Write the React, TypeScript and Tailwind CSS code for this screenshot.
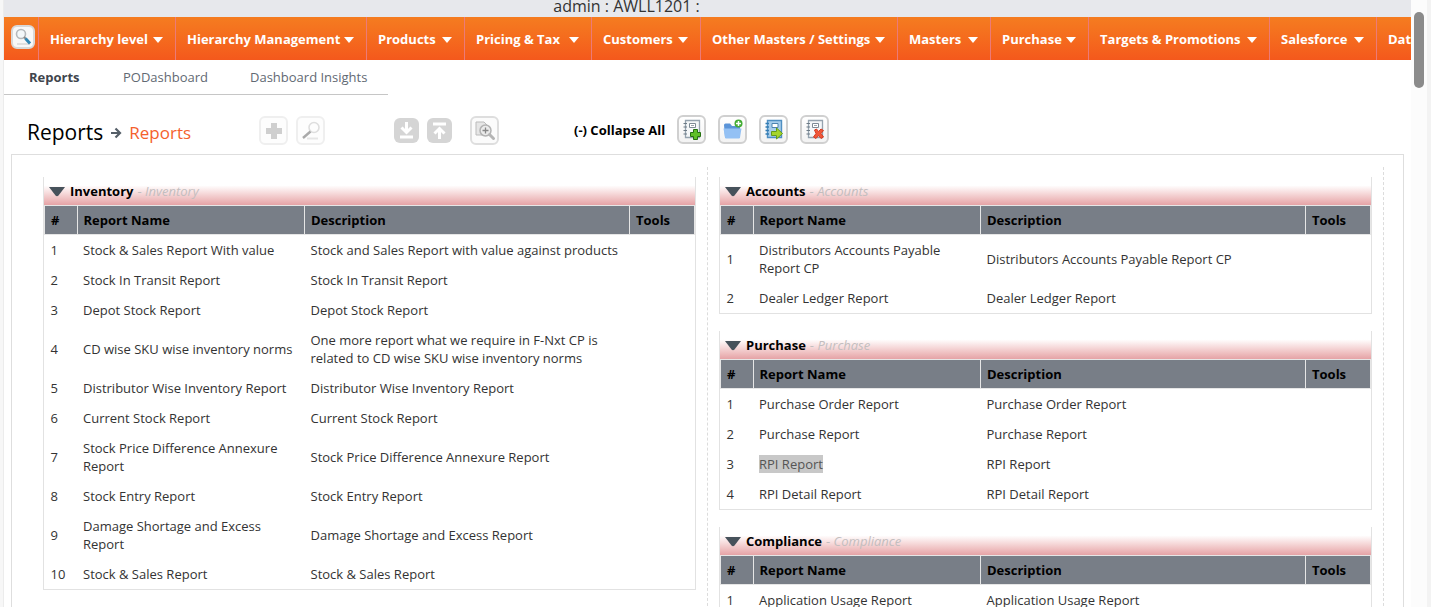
import type { ReactNode } from "react";

type Row = { name: string; description: string; selected?: boolean };
type Group = { title: string; rows: Row[] };

const same = (name: string, selected = false): Row => ({ name, description: name, selected });

const inventory: Group = {
  title: "Inventory",
  rows: [
    { name: "Stock & Sales Report With value", description: "Stock and Sales Report with value against products" },
    same("Stock In Transit Report"),
    same("Depot Stock Report"),
    {
      name: "CD wise SKU wise inventory norms",
      description: "One more report what we require in F-Nxt CP is related to CD wise SKU wise inventory norms",
    },
    same("Distributor Wise Inventory Report"),
    same("Current Stock Report"),
    same("Stock Price Difference Annexure Report"),
    same("Stock Entry Report"),
    same("Damage Shortage and Excess Report"),
    same("Stock & Sales Report"),
  ],
};

const rightGroups: Group[] = [
  { title: "Accounts", rows: [same("Distributors Accounts Payable Report CP"), same("Dealer Ledger Report")] },
  {
    title: "Purchase",
    rows: [same("Purchase Order Report"), same("Purchase Report"), same("RPI Report", true), same("RPI Detail Report")],
  },
  { title: "Compliance", rows: [same("Application Usage Report")] },
];

const menus = [
  { label: "Hierarchy level", width: "w-[137px]" },
  { label: "Hierarchy Management", width: "w-[191px]" },
  { label: "Products", width: "w-[98px]" },
  { label: "Pricing & Tax", width: "w-[127px]" },
  { label: "Customers", width: "w-[109px]" },
  { label: "Other Masters / Settings", width: "w-[197px]" },
  { label: "Masters", width: "w-[93px]" },
  { label: "Purchase", width: "w-[98px]" },
  { label: "Targets & Promotions", width: "w-[181px]" },
  { label: "Salesforce", width: "w-[107px]" },
  { label: "Dat", width: "w-[90px]" },
];

function Notebook() {
  return (
    <>
      <path d="M4.5 1.5h14v17h-14z" fill="#f4f7f9" stroke="#95a3af" strokeWidth="1.3" />
      <path d="M8.5 4.5h6v4h-6z" fill="#fff" stroke="#7d8a95" />
      <path d="M10 6.5h3" stroke="#9aa5ae" />
      <path d="M2.500 4.500h3.500M2.500 8h3.500M2.500 11.500h3.500M2.500 15h3.500" stroke="#6d7a85" strokeWidth="1.100" />
    </>
  );
}

const toolTones = {
  strong: "border-[#d0d0d0] bg-linear-to-b from-white to-[#f3f3f3]",
  soft: "border-[#dedede] bg-[#fbfbfb]",
  faded: "border-[#efefef] bg-[#fdfdfd]",
};

function ToolButton({ label, tone = "strong", children }: { label: string; tone?: keyof typeof toolTones; children: ReactNode }) {
  return (
    <button
      type="button"
      aria-label={label}
      className={`${toolTones[tone]} flex size-[29px] shrink-0 items-center justify-center rounded-md border-2`}
    >
      <svg viewBox="0 0 22 22" className="size-[22px] shrink-0" fill="none">
        {children}
      </svg>
    </button>
  );
}

function ArrowButton({ label, d }: { label: string; d: string }) {
  return (
    <button type="button" aria-label={label} className="flex size-[25px] shrink-0 items-center justify-center rounded-md bg-[#d5d5d5]">
      <svg viewBox="0 0 25 25" className="size-[25px]" fill="none" stroke="#fff" strokeWidth="3">
        <path d={d} />
      </svg>
    </button>
  );
}

function ReportGroup({ group }: { group: Group }) {
  return (
    <section className="border border-t-0 border-[#e2e2e2]">
      <h2 className="flex h-7 items-center bg-linear-to-b from-white from-30% to-[#e5a3a6] pt-0.5 pl-[5px] text-[13px] font-bold text-black">
        <button type="button" aria-label={`Collapse ${group.title}`} className="mr-[5px]">
          <svg viewBox="0 0 16 10" className="h-[10px] w-4">
            <path d="M0 0h16L9.500 8.500Q8 10 6.500 8.500z" fill="#47525b" />
          </svg>
        </button>
        {group.title}
        <span className="ml-1 font-normal text-[#c3bebf]">
          - <i>{group.title}</i>
        </span>
      </h2>
      <table className="w-full table-fixed border-collapse text-left text-[13px] leading-[18px]">
        <thead>
          <tr className="h-[29px] bg-[#787e87] text-black">
            <th className="w-[5%] border border-[#e6e6e6] px-1.5">#</th>
            <th className="w-[35%] border border-[#e6e6e6] px-1.5">Report Name</th>
            <th className="w-[50%] border border-[#e6e6e6] px-1.5">Description</th>
            <th className="w-[10%] border border-[#e6e6e6] px-1.5">Tools</th>
          </tr>
        </thead>
        <tbody className="text-[#333]">
          {group.rows.map((row, i) => (
            <tr key={row.name}>
              <td className="py-1.5 pl-1.5">{i + 1}</td>
              <td className="py-1.5 pr-3 pl-1.5">
                <a href="#report" className={row.selected ? "bg-[#c8c8c8] text-[#555]" : ""}>
                  {row.name}
                </a>
              </td>
              <td className="py-1.5 pl-1.5">{row.description}</td>
              <td />
            </tr>
          ))}
        </tbody>
      </table>
    </section>
  );
}

export default function App() {
  return (
    <div className="flex h-screen overflow-hidden bg-white font-['Open_Sans','Noto_Sans',sans-serif] text-[13px] text-black">
      <div className="w-1 shrink-0 border-r border-[#ececec] bg-[#f7f7f7]" />
      <div className="flex min-w-0 flex-1 flex-col">
        <header className="h-[17px] shrink-0 bg-[#e7e8ec] pr-[162px] text-center text-[16px] leading-[13px] text-[#333]">
          admin : AWLL1201 :
        </header>
        <nav aria-label="Main" className="flex h-[43px] shrink-0 overflow-hidden bg-linear-to-b from-[#f57c20] to-[#f4581c]">
          <div className="w-[34px] shrink-0 pt-2 pl-[7px]">
            <button type="button" aria-label="Search" className="flex size-6 items-center justify-center rounded-md border-2 border-[#d8d8d8] bg-[#f8f8f8]">
              <svg viewBox="0 0 20 20" className="size-5 shrink-0" fill="none">
                <path d="M4 17h13" stroke="#e0e0e0" strokeWidth="2" />
                <circle cx="8" cy="7" r="4.500" fill="#f4f8fa" stroke="#b5b9bc" strokeWidth="1.600" />
                <path d="M11 10l2 2" stroke="#888" strokeWidth="2" />
                <path d="M12.500 11.500l4.500 5" stroke="#3187b5" strokeWidth="3" />
              </svg>
            </button>
          </div>
          {menus.map((menu) => (
            <button
              key={menu.label}
              type="button"
              className={`${menu.width} flex shrink-0 items-center justify-between border-l border-[#ec7a78] pt-0.5 pr-3 pl-[11px] text-[13px] font-bold whitespace-nowrap text-white`}
            >
              {menu.label}
              <svg viewBox="0 0 10 6" className="h-1.5 w-2.5 shrink-0">
                <path d="M0 0h10L5 6z" fill="#fff" />
              </svg>
            </button>
          ))}
        </nav>
        <nav aria-label="Section" className="flex h-[35px] w-[384px] shrink-0 items-center border-b border-[#c6c6c6] pt-0.5 pl-[25px] text-[13px] text-[#626973]">
          <a href="#reports" className="w-[94px] font-bold text-[#3f454d]">Reports</a>
          <a href="#po" className="w-[127px]">PODashboard</a>
          <a href="#insights">Dashboard Insights</a>
        </nav>
        <div className="flex h-[59px] shrink-0 items-center pt-3 pl-[23px]">
          <h1 className="flex w-[232px] items-center pt-1 text-[21px]">
            Reports
            <svg viewBox="0 0 12 12" className="mx-[7px] size-3" fill="none" stroke="#555f68" strokeWidth="2.200">
              <path d="M1 6h8M5.500 1.500L10 6l-4.500 4.500" />
            </svg>
            <span className="text-[17px] text-[#f4612c]">Reports</span>
          </h1>
          <div className="flex items-center gap-2">
            <ToolButton label="Add" tone="faded">
              <path d="M8 3h6v5h5v6h-5v5H8v-5H3V8h5z" fill="#cfcfcf" />
            </ToolButton>
            <ToolButton label="Search reports" tone="faded">
              <circle cx="14" cy="7.500" r="5" stroke="#dedede" strokeWidth="1.600" />
              <path d="M10.500 11.500L3 18" stroke="#aaa" strokeWidth="2.400" />
              <path d="M7 18.500h11" stroke="#e6e6e6" strokeWidth="2" />
            </ToolButton>
          </div>
          <div className="ml-[69px] flex items-center gap-2">
            <ArrowButton label="Download" d="M12.500 4v10M7.500 9.500l5 5 5-5M6 19h13" />
            <ArrowButton label="Upload" d="M6 6h13M12.500 21V11M7.500 15.500l5-5 5 5" />
          </div>
          <div className="ml-[18px]">
            <ToolButton label="Preview" tone="soft">
              <path d="M2 2h8l3 3v10H2z" fill="#e6e6e6" stroke="#bbb" />
              <circle cx="11.500" cy="10.500" r="5.500" fill="#ebebeb" stroke="#b3b3b3" strokeWidth="1.500" />
              <path d="M11.500 7.500v6M8.500 10.500h6" stroke="#888" strokeWidth="1.300" />
              <path d="M15.500 14.500l4 4" stroke="#b5b5b5" strokeWidth="3" strokeLinecap="round" />
            </ToolButton>
          </div>
          <button type="button" className="ml-[75px] w-[103px] text-left text-[13px] font-bold whitespace-nowrap">
            (-) Collapse All
          </button>
          <div className="flex items-center gap-3 pb-0.5">
            <ToolButton label="Add report">
              <Notebook />
              <path d="M12.500 10.500h4v3h3v4h-3v3h-4v-3h-3v-4h3z" fill="#5fbf28" stroke="#23700f" />
            </ToolButton>
            <ToolButton label="Add folder">
              <path d="M2 6q0-1.500 1.500-1.500H8L10 7h8v11q0 1-1 1H4q-1 0-1-1z" fill="#5b94d8" />
              <path d="M1.500 9.500h18L18 18.500q0 1-1 1H4q-1 0-1-1z" fill="#94c1f4" />
              <circle cx="16.500" cy="4.500" r="4" fill="#43ad35" />
              <path d="M16.500 2v5M14 4.500h5" stroke="#fff" strokeWidth="1.500" />
            </ToolButton>
            <ToolButton label="Move report">
              <path d="M4.500 1.500h14v17h-14z" fill="#a7cdeb" stroke="#4f8fc2" strokeWidth="1.400" />
              <path d="M9 4.500h6v4H9z" fill="#fff" stroke="#4d83af" />
              <path d="M2.500 4.500h3.500M2.500 8h3.500M2.500 11.500h3.500M2.500 15h3.500" stroke="#337cb3" strokeWidth="1.300" />
              <path d="M8.500 12.500h5v-3.500l6 5.500-6 5.500v-3.500h-5z" fill="#a5d52d" stroke="#659b1b" />
            </ToolButton>
            <ToolButton label="Delete report">
              <Notebook />
              <path d="M10.500 11l2-1 2 2.500L17 10l2.500 1.500-2.500 3 2.500 3.500-2.500 1.500-2.500-3-2.500 3L9.500 18l2.500-3.500z" fill="#f15739" stroke="#d33b22" />
            </ToolButton>
          </div>
        </div>
        <main className="mr-[7px] ml-[7px] grid min-h-0 flex-1 grid-cols-2 overflow-hidden border border-b-0 border-[#dedede] pt-3 pr-[19px] pl-5">
          <div className="flex flex-col gap-[17px] border-r border-dashed border-[#dcdcdc] px-[11px] pt-[10px]">
            <ReportGroup group={inventory} />
          </div>
          <div className="flex flex-col gap-[17px] border-r border-dashed border-[#dcdcdc] px-[11px] pt-[10px]">
            {rightGroups.map((group) => (
              <ReportGroup key={group.title} group={group} />
            ))}
          </div>
        </main>
      </div>
      <div className="w-5 shrink-0 border-r-4 border-[#f3f3f3] bg-[#fcfcfc] pt-3 pl-[3px]">
        <div className="h-[76px] w-[10px] rounded-full bg-[#8b8b8b]" />
      </div>
    </div>
  );
}
